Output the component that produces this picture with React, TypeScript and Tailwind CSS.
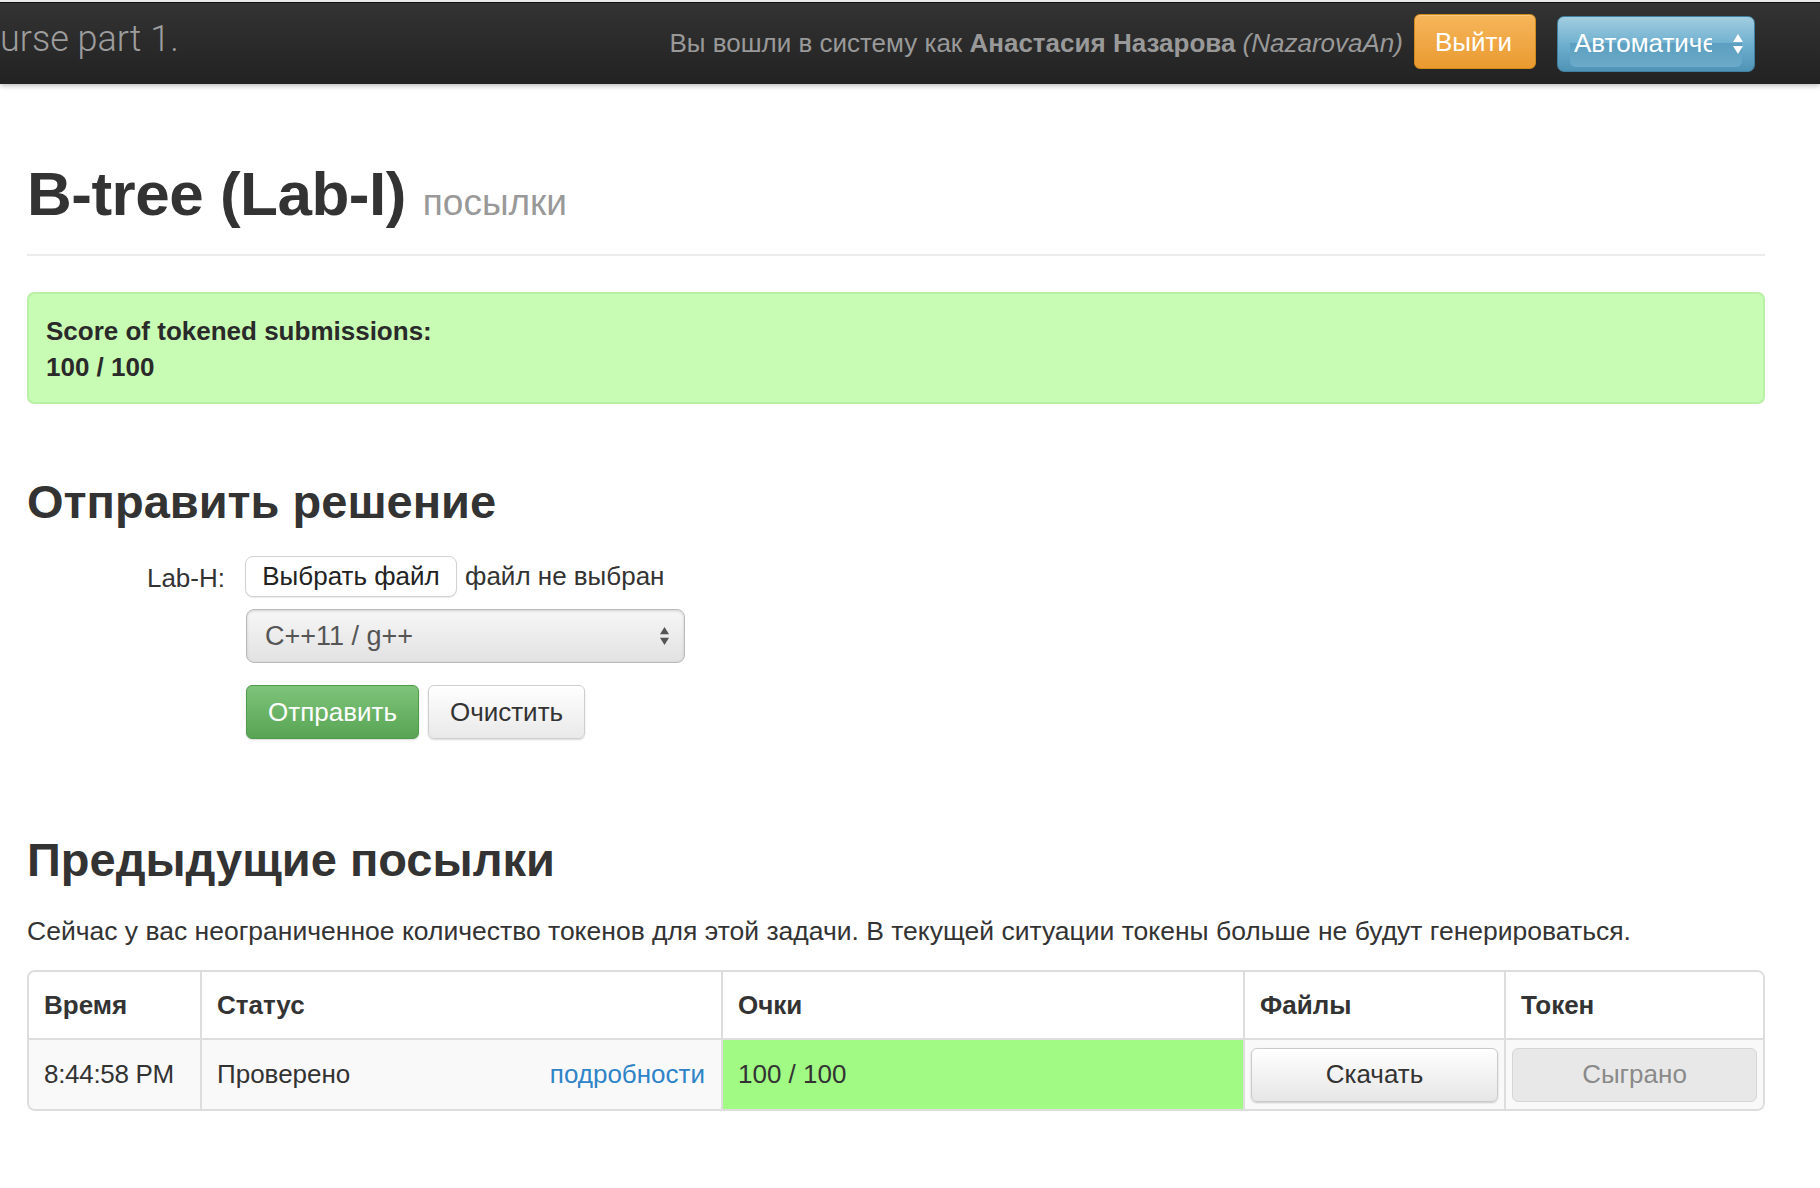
import React from "react";

function UpDown({ color = "#fff", w = 12, h = 22 }: { color?: string; w?: number; h?: number }) {
  return (
    <svg width={w} height={h} viewBox="0 0 12 22" aria-hidden>
      <polygon points="6,1 11,9 1,9" fill={color} />
      <polygon points="6,21 11,13 1,13" fill={color} />
    </svg>
  );
}

export default function App() {
  return (
    <div className="min-h-[1188px] w-[1820px] overflow-hidden bg-white font-['Liberation_Sans',Arial,sans-serif] text-[#333]">
      {/* Navbar */}
      <div className="h-[2px] bg-[#ececec]" />
      <div className="h-[1px] bg-[#111]" />
      <div className="flex h-[81px] items-center bg-gradient-to-b from-[#333333] to-[#222222] shadow-[0_2px_5px_rgba(0,0,0,0.25)]">
        <div className="-mt-[10px] whitespace-nowrap font-['Roboto',sans-serif] text-[36px] font-light text-[#9d9d9d]">
          urse part 1.
        </div>
        <div className="ml-auto flex items-center pr-[65px]">
          <div className="mr-[11px] whitespace-nowrap text-[26px] text-[#999]">
            Вы вошли в систему как <b className="font-bold">Анастасия Назарова</b>{" "}
            <i>(NazarovaAn)</i>
          </div>
          <button className="mb-[4px] flex h-[55px] w-[122px] items-start rounded-[6px] border border-[#d08a1c] bg-gradient-to-b from-[#f6b65a] to-[#ea9a2e] pl-[20px] pt-[8px] text-[26px] text-white shadow-[inset_0_1px_0_rgba(255,255,255,0.25)]">
            Выйти
          </button>
          <div className="relative ml-[21px] flex h-[56px] w-[198px] items-center overflow-hidden rounded-[7px] border border-[#3f7f9f] bg-gradient-to-b from-[#a2cde0] via-[#6fb0cf] to-[#4f93b6] pl-[16px] text-[26px] text-white">
            <div className="absolute inset-x-[12px] bottom-[4px] top-[26px] rounded-b-[6px] bg-gradient-to-b from-[#4d92b5] to-[#7cb7d2] opacity-60" />
            <span className="relative block w-[138px] overflow-hidden whitespace-nowrap">Автоматически</span>
            <span className="relative ml-[20px]">
              <UpDown color="#fff" />
            </span>
          </div>
        </div>
      </div>

      {/* Content */}
      <div className="ml-[27px] w-[1738px]">
        <div className="mt-[76px] flex items-baseline whitespace-nowrap leading-[68px]">
          <span className="text-[62px] font-bold tracking-[-0.5px] text-[#333]">B-tree (Lab-I)</span>
          <span className="ml-[17px] text-[37px] text-[#999]">посылки</span>
        </div>
        <div className="mt-[17px] h-[2px] bg-[#ececec]" />

        <div className="mt-[36px] h-[112px] rounded-[7px] border-2 border-[#b9f0a6] bg-[#c8fcb4] pl-[17px] pt-[19px] text-[26px] font-bold leading-[36px] text-[#2a2a2a]">
          <div>Score of tokened submissions:</div>
          <div>100 / 100</div>
        </div>

        <h2 className="mt-[72px] text-[47px] font-bold leading-[52px] text-[#333]">
          Отправить решение
        </h2>

        <div className="mt-[27px] flex items-center">
          <div className="w-[198px] pt-[4px] text-right text-[26px] text-[#333]">Lab-H:</div>
          <div className="ml-[20px] flex items-center">
            <button className="h-[41px] w-[212px] rounded-[8px] border border-[#d2d2d2] bg-white text-[26px] text-[#222] shadow-[0_1px_1px_rgba(0,0,0,0.08)]">
              Выбрать файл
            </button>
            <span className="ml-[8px] text-[26px] text-[#333]">файл не выбран</span>
          </div>
        </div>
        <div className="ml-[219px] mt-[11px] flex h-[54px] w-[439px] items-center rounded-[8px] border border-[#b9b9b9] bg-gradient-to-b from-[#f7f7f7] via-[#ececec] to-[#e2e2e2] pl-[18px] pr-[14px] text-[27px] text-[#555] shadow-[inset_0_1px_3px_rgba(0,0,0,0.15)]">
          <span>C++11 / g++</span>
          <span className="ml-auto">
            <UpDown color="#555" w={11} h={20} />
          </span>
        </div>
        <div className="ml-[219px] mt-[22px] flex gap-[9px]">
          <button className="h-[54px] w-[173px] rounded-[6px] border border-[#4f9a4b] bg-gradient-to-b from-[#7ec47a] to-[#58a454] text-[26px] text-white shadow-[0_1px_2px_rgba(0,0,0,0.15)]">
            Отправить
          </button>
          <button className="h-[54px] w-[157px] rounded-[6px] border border-[#cfcfcf] bg-gradient-to-b from-white to-[#e9e9e9] text-[26px] text-[#333] shadow-[0_1px_2px_rgba(0,0,0,0.15)]">
            Очистить
          </button>
        </div>

        <h2 className="mt-[95px] text-[47px] font-bold leading-[52px] text-[#333]">
          Предыдущие посылки
        </h2>
        <p className="mt-[28px] whitespace-nowrap text-[26.5px] leading-[34px] text-[#333]">
          Сейчас у вас неограниченное количество токенов для этой задачи. В текущей ситуации токены больше не будут генерироваться.
        </p>

        <div className="mt-[22px] overflow-hidden rounded-[8px] border-2 border-[#dddddd] text-[26px]">
          <div className="flex h-[68px] border-b-2 border-[#dddddd] bg-white font-bold text-[#333]">
            <div className="flex w-[171px] items-center px-[15px]">Время</div>
            <div className="flex w-[521px] items-center border-l-2 border-[#dddddd] px-[15px]">Статус</div>
            <div className="flex w-[522px] items-center border-l-2 border-[#dddddd] px-[15px]">Очки</div>
            <div className="flex w-[261px] items-center border-l-2 border-[#dddddd] px-[15px]">Файлы</div>
            <div className="flex w-[259px] items-center border-l-2 border-[#dddddd] px-[15px]">Токен</div>
          </div>
          <div className="flex h-[69px] bg-[#f9f9f9] text-[#333]">
            <div className="flex w-[171px] items-center whitespace-nowrap px-[15px] tracking-[-0.3px]">8:44:58 PM</div>
            <div className="flex w-[521px] items-center border-l-2 border-[#dddddd] pl-[15px] pr-[16px]">
              <span>Проверено</span>
              <span className="ml-auto text-[#2f84c8]">подробности</span>
            </div>
            <div className="flex w-[522px] items-center border-l-2 border-[#dddddd] bg-[#a0fa84] px-[15px]">
              100 / 100
            </div>
            <div className="flex w-[261px] items-center border-l-2 border-[#dddddd] px-[6px]">
              <button className="h-[54px] w-full rounded-[6px] border border-[#cbcbcb] bg-gradient-to-b from-white to-[#e6e6e6] text-[26px] text-[#333] shadow-[0_1px_2px_rgba(0,0,0,0.2)]">
                Скачать
              </button>
            </div>
            <div className="flex w-[259px] items-center border-l-2 border-[#dddddd] px-[6px]">
              <button className="h-[54px] w-full rounded-[6px] border border-[#d6d6d6] bg-[#e8e8e8] text-[26px] text-[#8a8a8a]">
                Сыграно
              </button>
            </div>
          </div>
        </div>
      </div>
    </div>
  );
}
